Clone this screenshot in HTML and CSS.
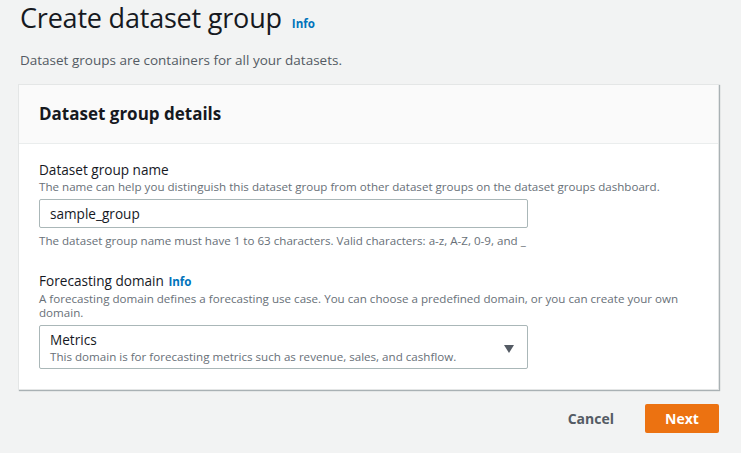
FILE: index.html
```html
<!DOCTYPE html>
<html>
<head>
<meta charset="utf-8">
<link rel="stylesheet" href="styles.css">
</head>
<body>
<div class="page">
  <div class="title-row">
    <h1 class="title">Create dataset group</h1>
    <a class="info">Info</a>
  </div>
  <p class="subtitle">Dataset groups are containers for all your datasets.</p>
  <div class="card">
    <div class="card-header">Dataset group details</div>
    <div class="card-body">
      <div class="field">
        <div class="label">Dataset group name</div>
        <div class="desc">The name can help you distinguish this dataset group from other dataset groups on the dataset groups dashboard.</div>
        <div class="input">sample_group</div>
        <div class="constraint">The dataset group name must have 1 to 63 characters. Valid characters: a-z, A-Z, 0-9, and _</div>
      </div>
      <div class="field field2">
        <div class="label">Forecasting domain <a class="info small">Info</a></div>
        <div class="desc">A forecasting domain defines a forecasting use case. You can choose a predefined domain, or you can create your own domain.</div>
        <div class="select">
          <div class="select-text">
            <div class="opt">Metrics</div>
            <div class="opt-desc">This domain is for forecasting metrics such as revenue, sales, and cashflow.</div>
          </div>
          <svg class="caret" width="10" height="8" viewBox="0 0 10 8"><path d="M0 0H10L5 8Z" fill="#545b64"/></svg>
        </div>
      </div>
    </div>
  </div>
  <div class="actions">
    <button class="btn-link">Cancel</button>
    <button class="btn-primary">Next</button>
  </div>
</div>
</body>
</html>
```

FILE: styles.css
```css
html, body {
  margin: 0;
  padding: 0;
  background: #f2f3f3;
}
body {
  font-family: "Open Sans", "Noto Sans", sans-serif;
  color: #16191f;
}
.page {
  padding: 0 22px 0 18px;
}
.title-row {
  display: flex;
  align-items: baseline;
  gap: 10px;
  height: 44px;
}
.title {
  margin: 0 0 0 2px;
  font-size: 27px;
  font-weight: 400;
  line-height: 36px;
  letter-spacing: -0.2px;
}
.info {
  color: #0073bb;
  font-weight: 700;
  font-size: 11.6px;
}
.info.small {
  margin-left: 1px;
}
.subtitle {
  margin: 6px 0 0 2px;
  font-size: 13.5px;
  line-height: 20px;
  color: #545b64;
}
.card {
  margin-top: 14px;
  background: #fff;
  border: 1px solid #e4e6e6;
  box-shadow: 1px 1px 1px 0 rgba(0,28,36,0.3);
}
.card-header {
  background: #fafafa;
  border-bottom: 1px solid #eaeded;
  height: 58px;
  line-height: 58px;
  padding-left: 20px;
  font-size: 17px;
  font-weight: 700;
}
.card-body {
  padding: 16px 20px 20px 20px;
}
.label {
  font-size: 13.6px;
  line-height: 20px;
}
.desc, .constraint {
  font-size: 11.6px;
  line-height: 14px;
  color: #687078;
}
.input {
  margin-top: 5px;
  width: 489px;
  box-sizing: border-box;
  height: 29px;
  border: 1px solid #aab7b8;
  border-radius: 2px;
  padding: 0 10px;
  font-size: 13.6px;
  line-height: 27px;
}
.constraint {
  margin-top: 6px;
}
.field2 {
  margin-top: 23px;
}
.select {
  margin-top: 5px;
  width: 489px;
  height: 44px;
  box-sizing: border-box;
  border: 1px solid #aab7b8;
  border-radius: 2px;
  padding: 2px 13px 0 10px;
  display: flex;
  align-items: center;
  justify-content: space-between;
}
.opt {
  font-size: 13.6px;
  line-height: 18px;
}
.opt-desc {
  font-size: 11.6px;
  line-height: 16px;
  color: #687078;
}
.caret {
  margin-top: 2px;
}
.actions {
  display: flex;
  justify-content: flex-end;
  align-items: center;
  gap: 16px;
  margin-top: 14px;
}
.btn-link, .btn-primary {
  font-family: inherit;
  font-size: 14px;
  font-weight: 700;
  border: none;
  cursor: pointer;
}
.btn-link {
  background: none;
  color: #545b64;
  padding: 0 15px;
  height: 29px;
}
.btn-primary {
  background: #ec7211;
  color: #fff;
  border-radius: 2px;
  width: 74px;
  height: 29px;
  padding: 0;
}
```
